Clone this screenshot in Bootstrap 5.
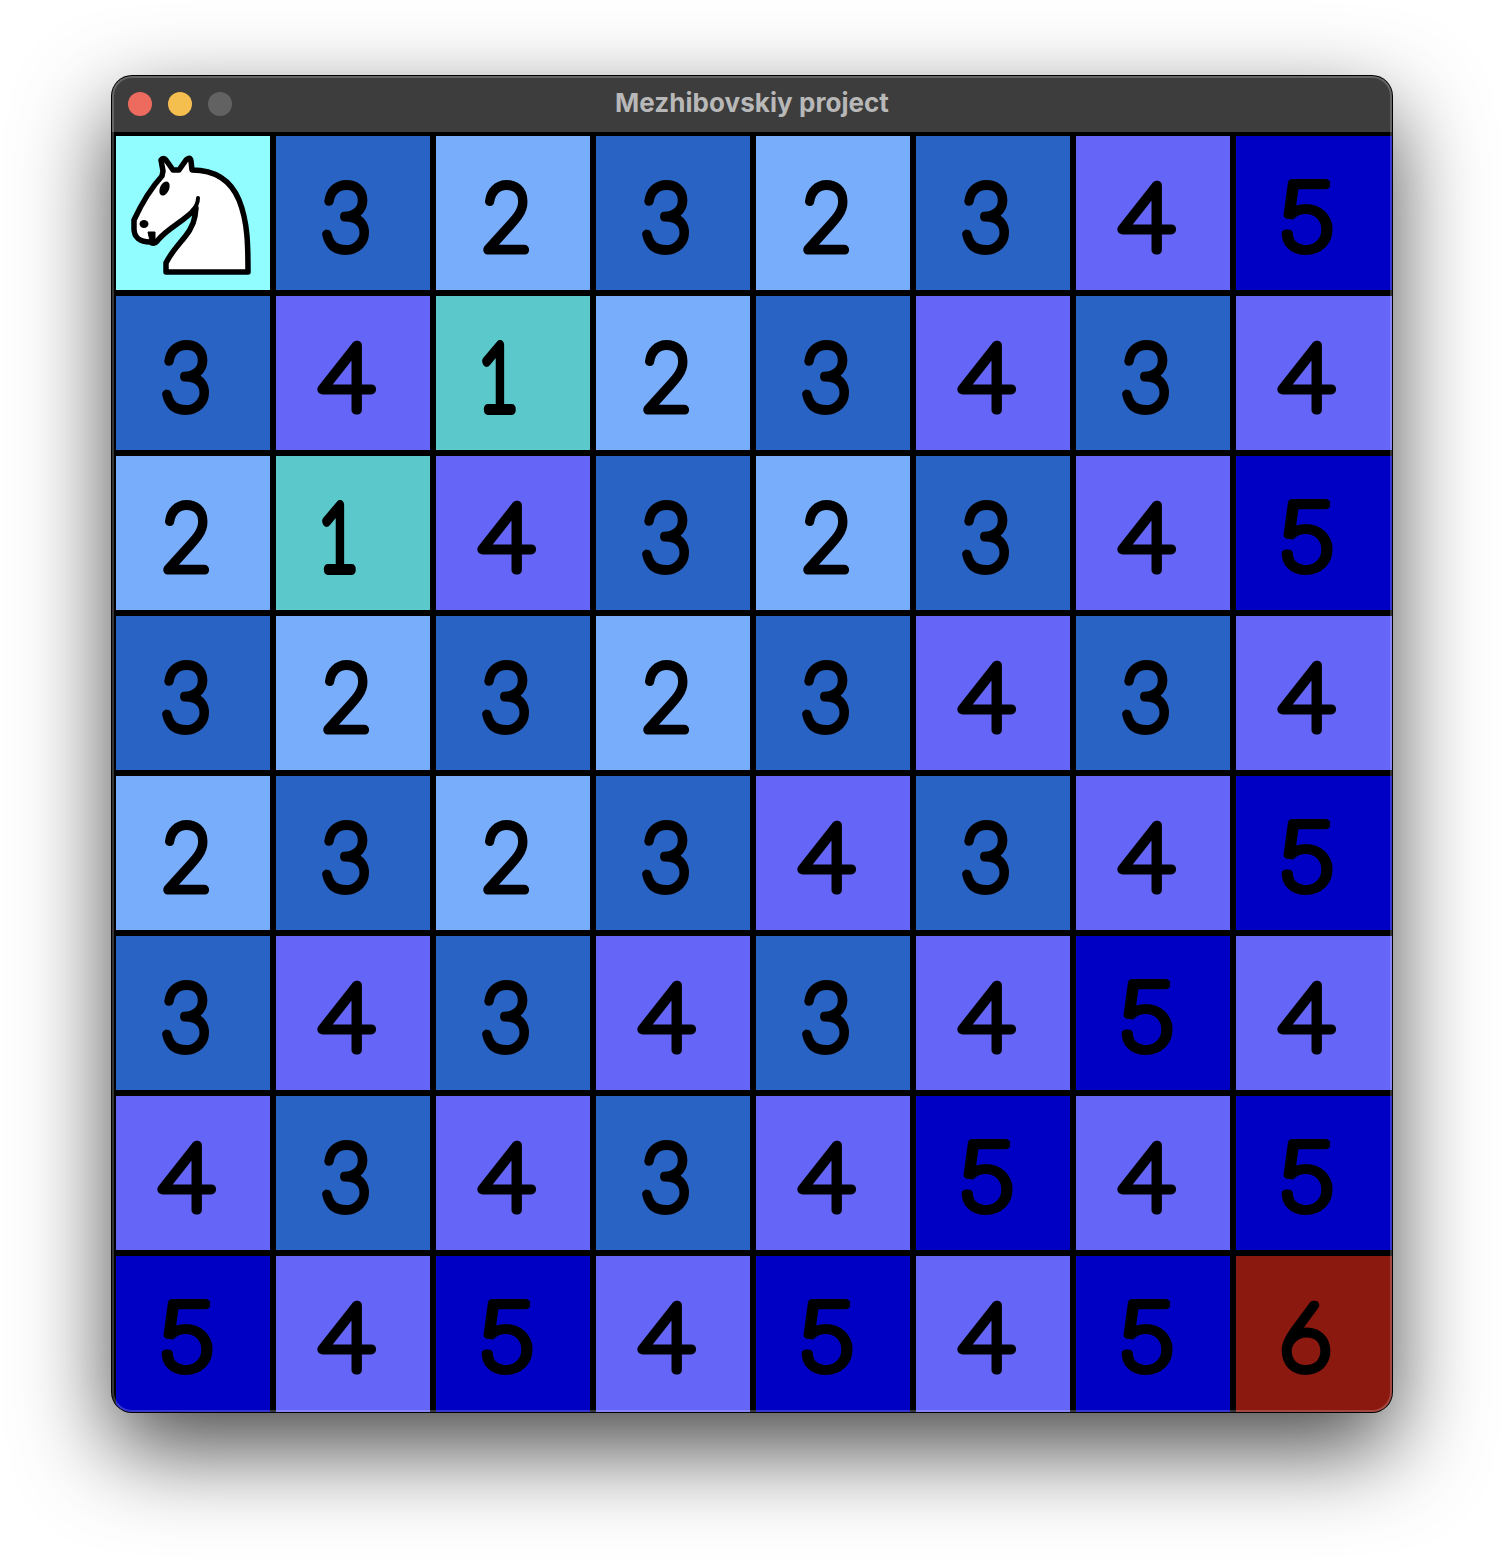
<!DOCTYPE html>
<html lang="en">
<head>
<meta charset="utf-8">
<meta name="viewport" content="width=device-width, initial-scale=1">
<title>Mezhibovskiy project</title>
<link href="https://cdn.jsdelivr.net/npm/bootstrap@5.3.0/dist/css/bootstrap.min.css" rel="stylesheet">
<style>
body{background:#fff;min-height:1560px;padding-top:76px;overflow:hidden}
.app-window{width:1280px;height:1336px;border-radius:20px;background:#000;box-shadow:0 0 0 1px #000,0 36px 92px rgba(0,0,0,.72)}
.app-window::after{content:"";position:absolute;inset:0;border-radius:20px;box-shadow:inset 0 0 0 2px rgba(255,255,255,.21);pointer-events:none}
.title-bar{height:56px;background:#3d3d3d;padding-left:16px;border-radius:20px 20px 0 0}
.light{width:24px;height:24px}
.l-close{background:#ed6a5f}.l-min{background:#f5bf4f}.l-off{background:#626262}
.win-title{font:700 26px/53px Inter,sans-serif;color:#b8b8b8;letter-spacing:.05px}
.board{display:grid;grid-template-columns:repeat(8,160px);grid-auto-rows:160px;overflow:hidden;border-radius:0 0 20px 20px;background:#000}
.sq{margin:4px 2px 2px 4px;overflow:hidden}
.sq:nth-child(8n){margin-right:0}
.sq:nth-child(n+57){margin-bottom:0}
.n0{background:#91fdfe}.n1{background:#5bc9cb}.n2{background:#78adfb}.n3{background:#2964c5}.n4{background:#6565f7}.n5{background:#0000c5}.n6{background:#8c1910}
.sq text{font-family:Lato,sans-serif;font-weight:100;font-size:92px;fill:#000;stroke:#000;stroke-width:9px;stroke-linejoin:round;stroke-linecap:round;text-anchor:middle}
.n1 text{stroke-width:10px}
.n5 text{font-family:Inter,sans-serif;stroke-width:8px}
svg{display:block}
</style>
</head>
<body>
<main class="app-window position-relative mx-auto">
  <header class="title-bar position-relative d-flex align-items-center gap-3">
    <span class="light l-close rounded-circle"></span><span class="light l-min rounded-circle"></span><span class="light l-off rounded-circle"></span>
    <h1 class="win-title position-absolute top-0 start-0 w-100 text-center m-0">Mezhibovskiy project</h1>
  </header>
  <section class="board" id="board"></section>
</main>
<script src="https://cdn.jsdelivr.net/npm/bootstrap@5.3.0/dist/js/bootstrap.bundle.min.js"></script>
<script>
const rows=["03232345","34123434","21432345","32323434","23234345","34343454","43434545","54545456"];
// centre x and horizontal scale of each numeral
const fit={1:[66,.76],2:[74.5,.93],3:[74,.95],4:[75,1.04],5:[74.5,1.12],6:[73.500,1]};
const knight=`<path d="M51 39 L49 28 Q51 25 54 28 L61 38 L67 38 L74 28 Q78 24 79 29 L80 38 C104 38 119 49 127 68 C136 90 136 115 136 140 L54 140 L54 131 C63 112 80 103 83 84 L84 76 C73 89 57 95 46 108 Q42 113 38 110 C28 110 22 105 22 97 L22 88 C29 73 38 57 50 44 Z" fill="#fff" stroke="#000" stroke-width="5.500" stroke-linejoin="round"/><path d="M86 66 Q86 73 80 79 L84 79" fill="none" stroke="#000" stroke-width="4" stroke-linecap="round" stroke-linejoin="round"/><ellipse cx="52.500" cy="56.500" rx="4.500" ry="7.500" transform="rotate(25 52.500 56.500)"/><ellipse cx="32" cy="92" rx="4.500" ry="4"/><path d="M36 100h7v9h-5z" stroke="#000" stroke-linejoin="round"/>`;
document.getElementById("board").innerHTML=rows.join("").split("").map(n=>{
  const f=fit[n];
  const inner=n==="0"?knight:`<text transform="translate(${f[0]} 118) scale(${f[1]} 1)">${n}</text>`;
  return `<div class="sq n${n}"><svg width="156" height="156" viewBox="4 4 156 156">${inner}</svg></div>`;
}).join("");
</script>
</body>
</html>
